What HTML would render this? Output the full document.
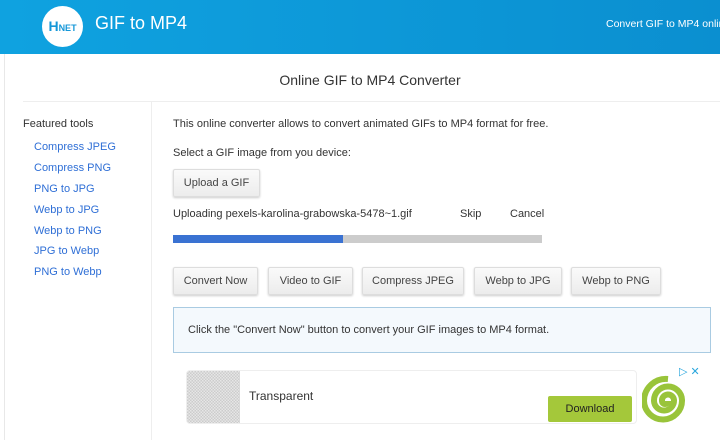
<!DOCTYPE html>
<html><head><style>
*{box-sizing:border-box;margin:0;padding:0}
body{width:720px;height:440px;overflow:hidden;background:#fff;font-family:"Liberation Sans",Arial,sans-serif;position:relative;color:#333}
.hdr{position:absolute;left:0;top:0;width:720px;height:54px;background:linear-gradient(90deg,#0fa2e0,#0b8fd0);}
.logo{position:absolute;left:42px;top:6px;width:41px;height:41px;border-radius:50%;background:#fff;color:#1597d8;font-weight:bold;font-size:14px;line-height:41px;text-align:center}
.logo small{font-size:9px}
.t{position:absolute;left:95px;top:13px;color:#fff;font-size:18px}
.r{position:absolute;left:606px;top:18px;color:#fff;font-size:10.5px;white-space:nowrap}
.lb{position:absolute;left:4px;top:54px;width:1px;height:386px;background:#e8e8e8}
h1{position:absolute;top:72px;left:0;width:740px;text-align:center;font-weight:normal;font-size:14px;color:#333}
.hl{position:absolute;left:23px;top:101px;width:697px;height:1px;background:#eee}
.vl{position:absolute;left:151px;top:101px;width:1px;height:339px;background:#eee}
.ft{position:absolute;left:23px;top:118px;font-size:11px;color:#333}
.sl a{position:absolute;left:34px;font-size:11px;color:#2f6fd6;text-decoration:none}
.p{position:absolute;left:173px;font-size:11px;color:#333;white-space:nowrap}
.btn{position:absolute;height:28px;border:1px solid #ddd;border-radius:2px;background:linear-gradient(#fafafa,#ececec);box-shadow:0 1px 2px rgba(0,0,0,.2);font-size:11px;color:#444;text-align:center;line-height:26px}
.bar{position:absolute;left:173px;top:235px;width:369px;height:8px;background:#ccc}
.bar div{width:170px;height:8px;background:#3a72d2}
.info{position:absolute;left:173px;top:307px;width:538px;height:46px;border:1px solid #a9cbe2;background:#f4f9fd;font-size:11px;color:#333;padding:0 0 0 14px;line-height:44px}
.ad{position:absolute;left:186px;top:370px;width:451px;height:54px;border:1px solid #eee;border-radius:4px;overflow:hidden}
.chk{position:absolute;left:0;top:0;width:53px;height:54px;background:repeating-conic-gradient(#ccc 0 25%,#e6e6e6 0 50%) 0 0/3px 3px}
</style></head><body>
<div class="hdr"><div class="logo">H<small>NET</small></div><div class="t">GIF to MP4</div><div class="r">Convert GIF to MP4 online</div></div>
<div class="lb"></div>
<h1>Online GIF to MP4 Converter</h1>
<div class="hl"></div><div class="vl"></div>
<div class="ft">Featured tools</div>
<div class="sl">
<a style="top:141px">Compress JPEG</a><a style="top:162px">Compress PNG</a><a style="top:183px">PNG to JPG</a><a style="top:204px">Webp to JPG</a><a style="top:225px">Webp to PNG</a><a style="top:245px">JPG to Webp</a><a style="top:266px">PNG to Webp</a>
</div>
<div class="p" style="top:118px">This online converter allows to convert animated GIFs to MP4 format for free.</div>
<div class="p" style="top:147px">Select a GIF image from you device:</div>
<div class="btn" style="left:173px;top:169px;width:87px">Upload a GIF</div>
<div class="p" style="top:208px">Uploading pexels-karolina-grabowska-5478~1.gif</div>
<div class="p" style="top:208px;left:460px">Skip</div>
<div class="p" style="top:208px;left:510px">Cancel</div>
<div class="bar"><div></div></div>
<div class="btn" style="left:173px;top:267px;width:85px">Convert Now</div>
<div class="btn" style="left:268px;top:267px;width:85px">Video to GIF</div>
<div class="btn" style="left:362px;top:267px;width:102px">Compress JPEG</div>
<div class="btn" style="left:474px;top:267px;width:88px">Webp to JPG</div>
<div class="btn" style="left:571px;top:267px;width:90px">Webp to PNG</div>
<div class="info">Click the "Convert Now" button to convert your GIF images to MP4 format.</div>
<div class="ad"><div class="chk"></div>
<div style="position:absolute;left:62px;top:18px;font-size:12px;color:#333">Transparent</div>
<div style="position:absolute;left:361px;top:25px;width:84px;height:26px;background:#a4c83a;border-radius:2px;font-size:11px;color:#222;text-align:center;line-height:26px">Download</div></div>
<svg style="position:absolute;left:642px;top:373px" width="52" height="52" viewBox="0 0 52 52"><path d="M26 28 a3 3 0 0 1 -6 0 a6 6 0 0 1 12 -1 a10 10 0 0 1 -20 1 a14 14 0 0 1 28 -1 a19 19 0 0 1 -38 1 a22 22 0 0 1 24 -22" fill="none" stroke="#99c43a" stroke-width="6"/></svg>
<div style="position:absolute;left:679px;top:365px;font-size:11px;color:#29a6dd">▷ ✕</div>
</body></html>
